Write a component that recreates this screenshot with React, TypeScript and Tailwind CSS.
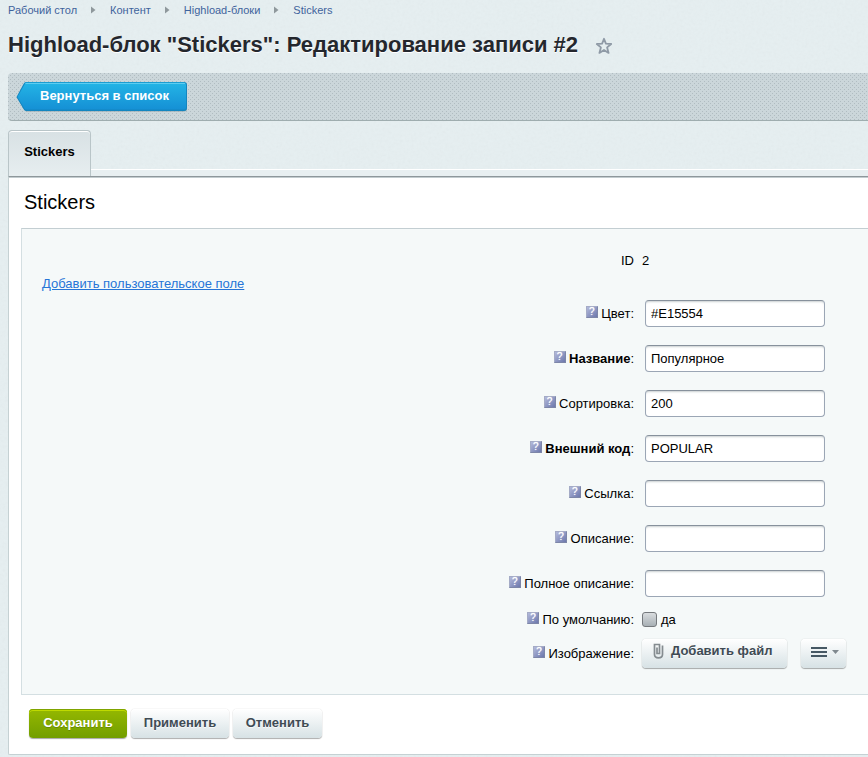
import type { ReactNode } from "react";
import { useState } from "react";

type Field = {
    label: string,
    value: string,
    required?: boolean
}

const crumbs = ['Рабочий стол', 'Контент', 'Highload-блоки', 'Stickers'];

const fields: Field[] = [
    { label: 'Цвет', value: '#E15554' },
    { label: 'Название', value: 'Популярное', required: true },
    { label: 'Сортировка', value: '200' },
    { label: 'Внешний код', value: 'POPULAR', required: true },
    { label: 'Ссылка', value: '' },
    { label: 'Описание', value: '' },
    { label: 'Полное описание', value: '' },
];

const Grain = () => (
    <svg className="absolute inset-0 w-full h-full opacity-[.06] pointer-events-none" aria-hidden="true">
        <filter id="grain">
            <feTurbulence type="fractalNoise" baseFrequency="0.35" numOctaves="2" seed="4" />
            <feColorMatrix type="saturate" values="0" />
        </filter>
        <rect width="100%" height="100%" filter="url(#grain)" />
    </svg>
);

const HelpIcon = () => (
    <span className="relative -top-[2px] mr-[3.5px] flex h-3 w-3 items-center justify-center border border-[#7d86a8] border-t-[#a4abc6] border-l-[#a4abc6] bg-gradient-to-br from-[#b3badb] to-[#6d78ac] text-[10px] leading-none text-white [text-shadow:0_0_1px_#fff]">
        ?
    </span>
);

const Row = ({ label, required, className, children }: { label: string, required?: boolean, className: string, children: ReactNode }) => (
    <div className={`flex items-center ${className}`}>
        <div className="flex w-[612px] shrink-0 items-center justify-end">
            <HelpIcon />
            <span className={required ? 'font-bold' : ''}>{label}</span>:
        </div>
        {children}
    </div>
);

const TextField = ({ label, value, required }: Field) => {
    const [text, setText] = useState(value);

    return (
        <Row label={label} required={required} className="h-[45px]">
            <input
                aria-label={label}
                value={text}
                onChange={(e) => setText(e.target.value)}
                className="ml-[11px] h-[27px] w-[180px] rounded-[4px] border border-[#9ba6b5] border-t-[#87919c] bg-white px-[5px] text-[13px] text-black shadow-[inset_0_2px_2px_-1px_rgba(180,188,191,.7)] outline-none"
            />
        </Row>
    );
}

const Button = ({ className, children }: { className: string, children: ReactNode }) => (
    <button className={`flex h-[29px] items-center rounded-[4px] bg-gradient-to-b from-white to-[#d7e2e5] text-[13px] font-bold text-[#3f4b54] shadow-[0_0_1px_rgba(0,0,0,.3),0_1px_1px_rgba(0,0,0,.3),inset_0_1px_0_#fff] [text-shadow:0_1px_0_rgba(255,255,255,.7)] ${className}`}>
        {children}
    </button>
);

const ClipIcon = () => (
    <svg width="11" height="16" viewBox="0 0 11 16" fill="none" stroke="#858c90" strokeWidth="1.7">
        <path d="M9.500 2.500V11.500q0 3.300-4 3.300T1.500 11.500V1.500H6.500V10.500H4V4.500" />
    </svg>
);

export default function App() {
    const [checked, setChecked] = useState(false);

    return (
        <div className="relative h-[757px] w-full overflow-hidden bg-[#e6eff1] font-['Liberation_Sans',Arial,sans-serif] text-[13px] leading-4 text-black">
            <Grain />
            <div className="relative pl-2">
                <nav className="flex h-5 items-center text-[11px] text-[#3f639c]">
                    {crumbs.map((crumb, i) => (
                        <div key={crumb} className="flex items-center">
                            {i > 0 && (
                                <svg width="5" height="8" viewBox="0 0 5 8" className="ml-[14px] mr-[14px]">
                                    <path d="M0 .5 4.5 4 0 7.5z" fill="#8f989c" />
                                </svg>
                            )}
                            <a>{crumb}</a>
                        </div>
                    ))}
                </nav>

                <div className="flex h-[53px] items-center pb-1">
                    <h1 className="whitespace-nowrap text-[22px] leading-[26px] font-bold text-[#24272d] [text-shadow:0_1px_0_#fff]">
                        Highload-блок "Stickers": Редактирование записи #2
                    </h1>
                    <svg width="18" height="18" viewBox="0 0 18 18" className="mt-[3px] ml-[17px]" fill="none" stroke="#8f9aa6" strokeWidth="1.8" strokeLinejoin="round">
                        <path d="M9 1.800 10.900 6.700 16.200 7 12.100 10.400 13.600 15.900 9 12.900 4.400 15.900 5.900 10.400 1.800 7 7.100 6.700z" />
                    </svg>
                </div>

                <div className="flex h-12 rounded-l-[4px] border-b border-[#9fadaf] bg-[#cbd6da] bg-[radial-gradient(circle_at_0.5px_0.5px,#b0bcc1_0.6px,transparent_0.7px),radial-gradient(circle_at_2.5px_2.5px,#b0bcc1_0.6px,transparent_0.7px)] bg-[size:4px_4px] pt-[9px] pl-2">
                    <a className="relative flex h-[30px] w-[171px] pt-[6px] pl-6 font-bold text-white">
                        <svg width="171" height="31" viewBox="0 0 171 31" className="absolute top-0 left-0">
                            <defs>
                                <linearGradient id="back" x1="0" y1="0" x2="0" y2="1">
                                    <stop offset="0" stopColor="#24b5e6" />
                                    <stop offset="1" stopColor="#1590d5" />
                                </linearGradient>
                            </defs>
                            <path d="M10 1.5h158q3 0 3 3v22q0 3-3 3H10L1 16z" fill="#8fa2aa" />
                            <path d="M10 0h158q3 0 3 3v23q0 3-3 3H10Q8.500 29 7.500 27L.5 15 7.500 2Q8.500 0 10 0z" fill="#1386c0" />
                            <path d="M10 .5h158q2 0 2 2.500v22.500q0 2-2 2H10.500Q9 27.500 8.500 26.500L1.500 15 8.500 2.500Q9.200.5 10 .5z" fill="url(#back)" />
                            <path d="M9.500 1.500H169" stroke="#5fcdf0" />
                        </svg>
                        <span className="relative">Вернуться в список</span>
                    </a>
                </div>

                <div className="mt-[9px] flex h-12">
                    <div className="flex h-[47px] w-[83px] justify-center rounded-t-[4px] border-x border-t border-[#b9c5c8] bg-gradient-to-b from-[#d8e1e4] to-[#e7eef0] pt-[13px] font-bold shadow-[inset_0_1px_0_#fff]">
                        Stickers
                    </div>
                    <div className="mt-[39px] h-2 flex-1 border-t border-white bg-[#e8eff1]" />
                </div>

                <div className="relative -mt-[2px] h-[579px] rounded-bl-[2px] border-t border-b border-l border-[#c5d1d3] border-t-[#8e979b] bg-white pt-px shadow-[inset_0_1px_0_#c3cccf]">
                    <h2 className="h-[50px] pt-3 pl-[15px] text-[20px] leading-6">Stickers</h2>

                    <div className="ml-3 h-[467px] border-y border-l border-[#d4dfe2] border-t-[#c3ced2] bg-[#f5f9f9] pt-[23px]">
                        <div className="flex h-[18px] items-center">
                            <span className="w-[612px] shrink-0 text-right">ID</span>
                            <span className="ml-2">2</span>
                        </div>
                        <div className="mt-[6px] flex h-[15px] items-center pl-5">
                            <a className="relative top-[0.5px] text-[#2675d7] underline">Добавить пользовательское поле</a>
                        </div>
                        {fields.map((field) => (
                            <TextField key={field.label} {...field} />
                        ))}
                        <Row label="По умолчанию" className="h-[27px]">
                            <button
                                role="checkbox"
                                aria-checked={checked}
                                aria-label="да"
                                onClick={() => setChecked(prev => !prev)}
                                className="ml-2 h-[15px] w-[15px] rounded-[3px] border border-[#75797d] bg-gradient-to-b from-[#d9dddf] to-[#a8b0b5]"
                            />
                            <span className="ml-[4px]">да</span>
                        </Row>
                        <Row label="Изображение" className="h-[41px]">
                            <Button className="mb-px ml-2 w-[145px] gap-[7px] pb-[4px] pl-[11px]">
                                <ClipIcon />
                                Добавить файл
                            </Button>
                            <Button className="mb-px ml-[14px] w-[45px] gap-[5px] pb-[3px] pl-[10px]">
                                <svg width="16" height="10" viewBox="0 0 16 10" fill="#465864">
                                    <path d="M0 0h16v2H0zM0 4h16v2H0zM0 8h16v2H0z" />
                                </svg>
                                <svg width="7" height="4" viewBox="0 0 7 4" fill="#7f888e">
                                    <path d="M0 0h7L3.500 4z" />
                                </svg>
                            </Button>
                        </Row>
                    </div>

                    <div className="mt-[14px] ml-5 flex gap-1">
                        <button className="flex h-[29px] w-[98px] items-center justify-center rounded-[4px] bg-gradient-to-b from-[#95b800] to-[#729e00] pb-px font-bold text-white shadow-[0_1px_1px_rgba(0,0,0,.35),inset_0_1px_0_#7fa300,inset_0_2px_0_#bfda00] [text-shadow:0_1px_0_rgba(80,110,0,.5)]">
                            Сохранить
                        </button>
                        <Button className="w-[98px] justify-center pb-px">Применить</Button>
                        <Button className="w-[89px] justify-center pb-px">Отменить</Button>
                    </div>
                </div>
            </div>
        </div>
    );
}
